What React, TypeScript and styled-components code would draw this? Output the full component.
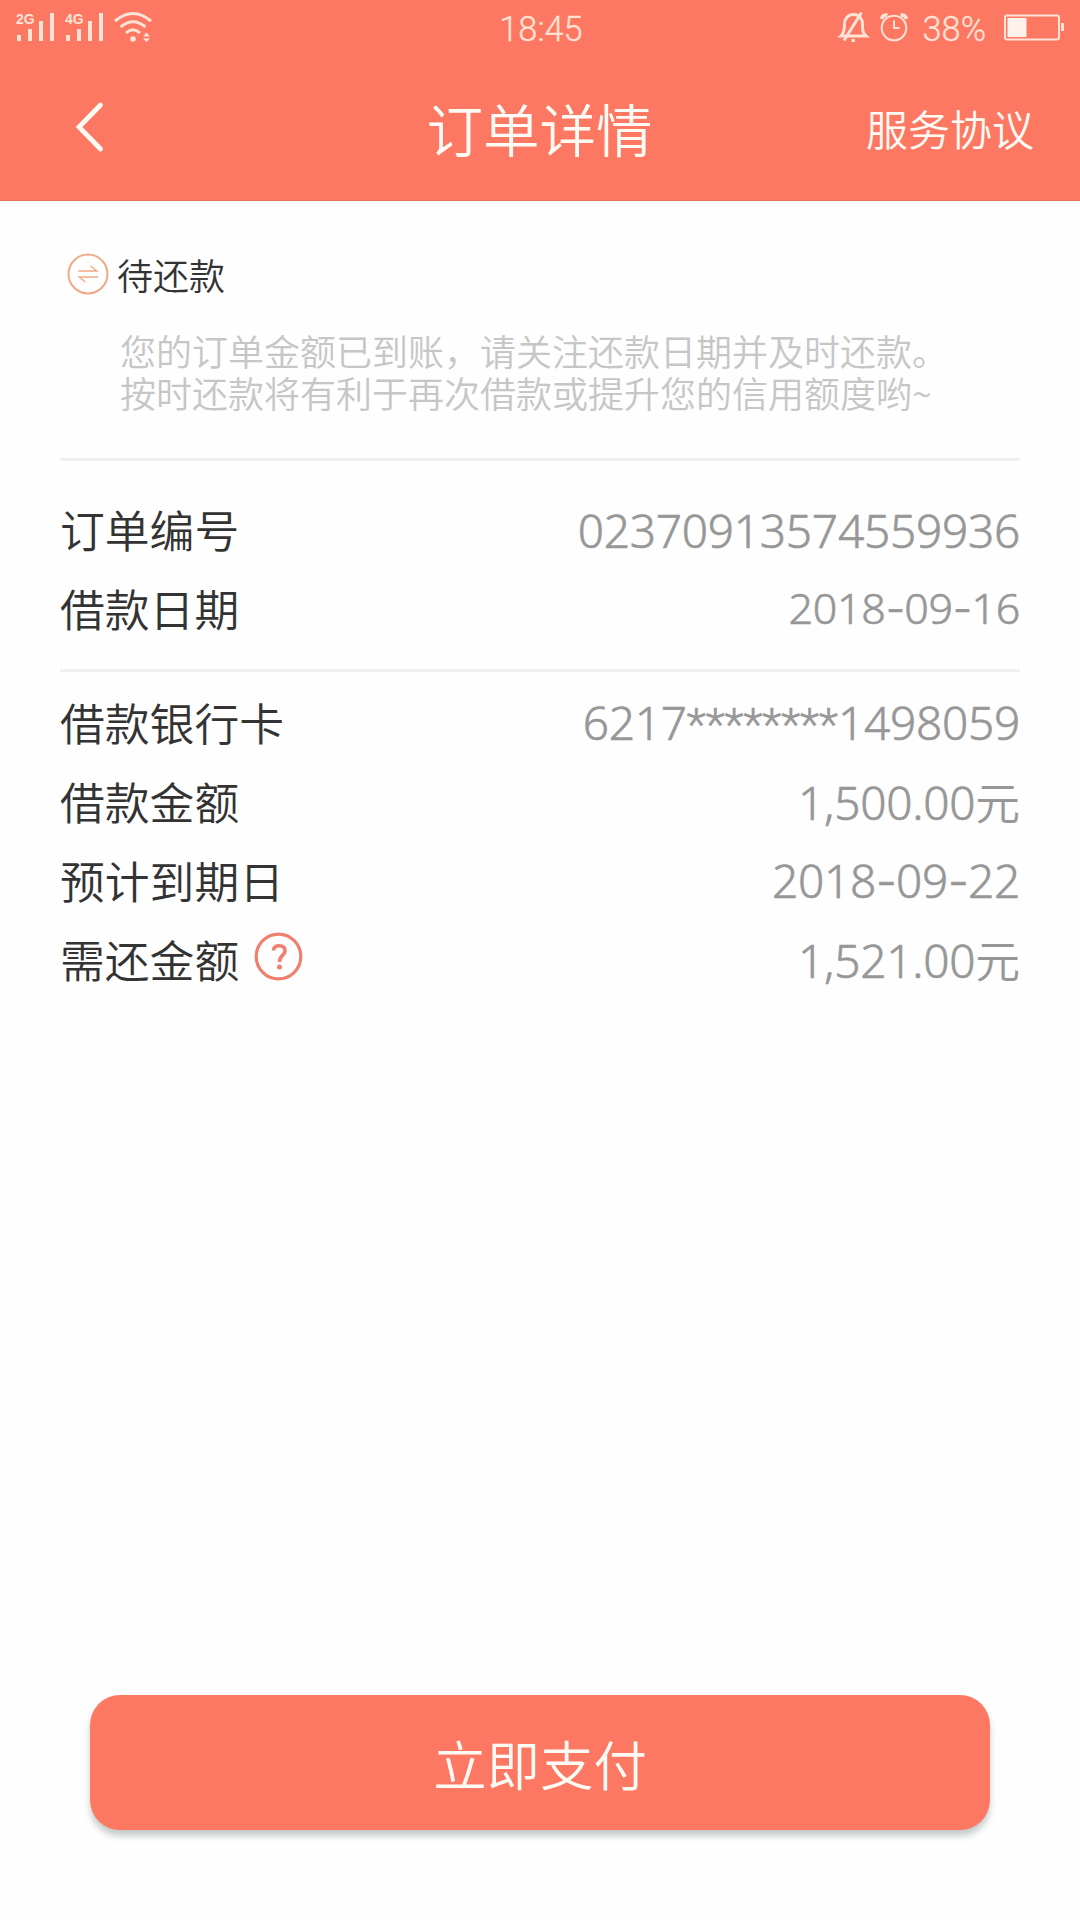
import React from "react";
import styled, { createGlobalStyle } from "styled-components";

const cjk = '"Noto Sans CJK SC", sans-serif';
const coral = "#fd7862";

const GlobalStyle = createGlobalStyle`
  * { box-sizing: border-box; }
  body { margin: 0; background: #fefefe; font-family: ${cjk}; font-weight: 350; }
`;

const Screen = styled.div`
  width: 1080px;
  height: 1920px;
  display: flex;
  flex-direction: column;
  background: #fefefe;
  overflow: hidden;
`;

const Header = styled.header`
  height: 201px;
  background: ${coral};
  border-bottom: 1px solid #e0705f;
  display: flex;
  flex-direction: column;
`;

const StatusBar = styled.div`
  height: 58px;
  display: grid;
  grid-template-columns: 1fr auto 1fr;
  align-items: center;
  padding: 0 14px 0 16px;
  color: #ffe3d6;

  svg { overflow: visible; }
`;

const StatusGroup = styled.div<{ $end?: boolean }>`
  display: flex;
  align-items: center;
  justify-content: ${(p) => (p.$end ? "flex-end" : "flex-start")};
`;

const StatusText = styled.span`
  font-family: Roboto, sans-serif;
  font-weight: 300;
  font-size: 34.3px;
  line-height: 58px;
  -webkit-text-stroke: 0.3px currentColor;
`;

const StatusIcons = styled.div`
  display: flex;
  gap: 10px;
  margin-right: 14px;
`;

const BatteryLevel = styled.div`
  display: flex;
  align-items: center;
  gap: 18px;
`;

const NavBar = styled.div`
  height: 142px;
  display: grid;
  grid-template-columns: 1fr auto 1fr;
  align-items: center;
  padding: 0 46px 4px 72px;
  color: #fffaf4;
`;

const BackButton = styled.button`
  border: 0;
  background: none;
  padding: 0;
  width: 36px;
  height: 52px;
`;

const Title = styled.h1`
  margin: 0;
  font-size: 56.5px;
  font-weight: 350;
  line-height: 80px;
  padding-right: 27px;
`;

const NavLink = styled.a`
  font-size: 42px;
  line-height: 60px;
  padding-top: 2px;
  text-align: right;
`;

const Content = styled.main`
  flex: 1;
  padding: 43px 60px 0;
`;

const State = styled.div`
  display: flex;
  align-items: center;
  height: 60px;
  padding-left: 7px;
  gap: 8px;
  font-size: 36px;
  color: #333;
`;

const Notice = styled.p`
  margin: 0;
  padding: 25px 0 45px 60px;
  font-size: 36px;
  line-height: 42px;
  color: #c6c6c6;
  white-space: nowrap;
`;

const Section = styled.section<{ $top: number; $bottom: number }>`
  border-top: 3px solid #f0f0f0;
  padding: ${(p) => p.$top}px 0 ${(p) => p.$bottom}px;
`;

const Row = styled.div`
  display: flex;
  align-items: center;
  justify-content: space-between;
  height: 79px;
`;

const Label = styled.span`
  display: flex;
  align-items: center;
  gap: 15px;
  font-size: 44.8px;
  line-height: 79px;
  color: #333;

  svg { margin-top: -4px; }
`;

const Value = styled.span<{ $size?: number; $drop?: number }>`
  display: flex;
  align-items: baseline;
  padding-top: ${(p) => p.$drop ?? 2}px;
  font-family: "Noto Sans", ${cjk};
  font-weight: 300;
  font-size: ${(p) => p.$size ?? 46}px;
  letter-spacing: -0.25px;
  line-height: 79px;
  color: #979797;
  -webkit-text-stroke: 0.6px currentColor;
`;

const Dash = styled.span`
  font-family: Inter, sans-serif;
  letter-spacing: -0.9px;
`;

const Mask = styled.span`
  font-family: Roboto, sans-serif;
  font-size: 44.5px;
  letter-spacing: 0;
`;

const Unit = styled.span`
  font-family: ${cjk};
  font-weight: 350;
  font-size: 44.8px;
  letter-spacing: 0;
  -webkit-text-stroke: 0;
`;

const Footer = styled.footer`
  padding: 0 90px 90px;
`;

const PayButton = styled.button`
  display: block;
  width: 100%;
  height: 135px;
  border: 0;
  padding: 0 0 1px;
  border-radius: 30px;
  background: ${coral};
  box-shadow: 0 6px 6px rgba(80, 100, 90, 0.32);
  color: #fffaf4;
  font-family: ${cjk};
  font-weight: 350;
  font-size: 53.4px;
`;

const SignalIcon = ({ label }: { label: string }) => (
  <svg width="49" height="32" viewBox="0 0 49 32" fill="#ffe3d6">
    <text x="0" y="10.5" fontFamily="Liberation Sans, sans-serif" fontWeight="700" fontSize="14">{label}</text>
    <rect x="1" y="22" width="4" height="6" />
    <rect x="12" y="16" width="4" height="12" />
    <rect x="23" y="8" width="4" height="20" />
    <rect x="34" y="0" width="4" height="28" />
  </svg>
);

const WifiIcon = () => (
  <svg width="40" height="32" viewBox="0 0 40 32" fill="none" stroke="#ffe3d6" strokeWidth="3">
    <path d="M1 8Q19 -7 37 8M6.500 14Q19 3.500 31.500 14M12 20Q19 13.500 26 20" />
    <circle cx="19" cy="26" r="2.800" fill="#ffe3d6" stroke="none" />
    <path d="M29 23.500L32.500 19.500L36 23.500ZM29 25.500L32.500 29L36 25.500Z" fill="#ffe3d6" stroke="none" />
  </svg>
);

const MutedBellIcon = () => (
  <svg width="30" height="32" viewBox="0 0 30 32" fill="none" stroke="#ffe3d6" strokeWidth="3">
    <path d="M2 23H27C23.500 20 23.500 17 23.500 11C23.500 5.500 20 1.500 14.500 1.500S5.500 5.500 5.500 11C5.500 17 5 20 2 23Z" />
    <path d="M22.500 -0.500L5 27.500M12.500 27.500H16" />
  </svg>
);

const AlarmIcon = () => (
  <svg width="30" height="32" viewBox="0 0 30 32" fill="none" stroke="#ffe3d6" strokeWidth="2">
    <circle cx="15" cy="15" r="12.300" />
    <path d="M15 7.500V15H20.500" />
    <path d="M2.500 6Q3.500 1.500 8.500 2M27.500 6Q26.500 1.500 21.500 2" strokeWidth="3.500" />
  </svg>
);

const BatteryIcon = () => (
  <svg width="62" height="28" viewBox="0 0 62 28" fill="none">
    <rect x="1" y="0.500" width="54" height="24" rx="2" stroke="#ffe3d6" strokeWidth="2" />
    <rect x="3.500" y="3" width="19" height="19" fill="#fff1eb" />
    <rect x="57" y="8" width="3" height="8" fill="#ffe3d6" />
  </svg>
);

const TransferIcon = () => (
  <svg width="42" height="42" viewBox="0 0 42 42" fill="none" stroke="#f0a984">
    <circle cx="21" cy="21" r="19.500" strokeWidth="2" />
    <path d="M11.500 18H30L23.500 13M31 24H12L18.500 29" strokeWidth="1.300" />
  </svg>
);

const HelpIcon = () => (
  <svg width="49" height="49" viewBox="0 0 49 49" fill="none" stroke="#f07f70">
    <circle cx="24.500" cy="24.500" r="22.300" strokeWidth="3.200" />
    <path d="M19.500 18.500C19.500 15.200 22 13.800 25 13.800C28.500 13.800 31 15.500 31 19C31 23.500 25.500 23 25.500 30" strokeWidth="3.600" />
    <circle cx="25.500" cy="35" r="2.500" fill="#f07f70" stroke="none" />
  </svg>
);

export default function App() {
  return (
    <Screen>
      <GlobalStyle />
      <Header>
        <StatusBar>
          <StatusGroup>
            <SignalIcon label="2G" />
            <SignalIcon label="4G" />
            <WifiIcon />
          </StatusGroup>
          <StatusText>18:45</StatusText>
          <StatusGroup $end>
            <StatusIcons>
              <MutedBellIcon />
              <AlarmIcon />
            </StatusIcons>
            <BatteryLevel>
              <StatusText>38%</StatusText>
              <BatteryIcon />
            </BatteryLevel>
          </StatusGroup>
        </StatusBar>
        <NavBar>
          <BackButton aria-label="返回">
            <svg width="36" height="52" viewBox="0 0 36 52" fill="none" stroke="#fffaf4" strokeWidth="4.800" strokeLinecap="round">
              <path d="M28.500 4L7 26L28.500 48" />
            </svg>
          </BackButton>
          <Title>订单详情</Title>
          <NavLink>服务协议</NavLink>
        </NavBar>
      </Header>
      <Content>
        <State>
          <TransferIcon />
          待还款
        </State>
        <Notice>
          您的订单金额已到账，请关注还款日期并及时还款。
          <br />
          按时还款将有利于再次借款或提升您的信用额度哟~
        </Notice>
        <Section $top={28} $bottom={22}>
          <Row>
            <Label>订单编号</Label>
            <Value $drop={4}>02370913574559936</Value>
          </Row>
          <Row>
            <Label>借款日期</Label>
            <Value $size={43} $drop={0}>
              2018<Dash>-</Dash>09<Dash>-</Dash>16
            </Value>
          </Row>
        </Section>
        <Section $top={10} $bottom={0}>
          <Row>
            <Label>借款银行卡</Label>
            <Value $drop={4}>
              6217<Mask>********</Mask>1498059
            </Value>
          </Row>
          <Row>
            <Label>借款金额</Label>
            <Value>1,500.00<Unit>元</Unit></Value>
          </Row>
          <Row>
            <Label>预计到期日</Label>
            <Value>
              2018<Dash>-</Dash>09<Dash>-</Dash>22
            </Value>
          </Row>
          <Row>
            <Label>
              需还金额
              <HelpIcon />
            </Label>
            <Value>1,521.00<Unit>元</Unit></Value>
          </Row>
        </Section>
      </Content>
      <Footer>
        <PayButton>立即支付</PayButton>
      </Footer>
    </Screen>
  );
}
